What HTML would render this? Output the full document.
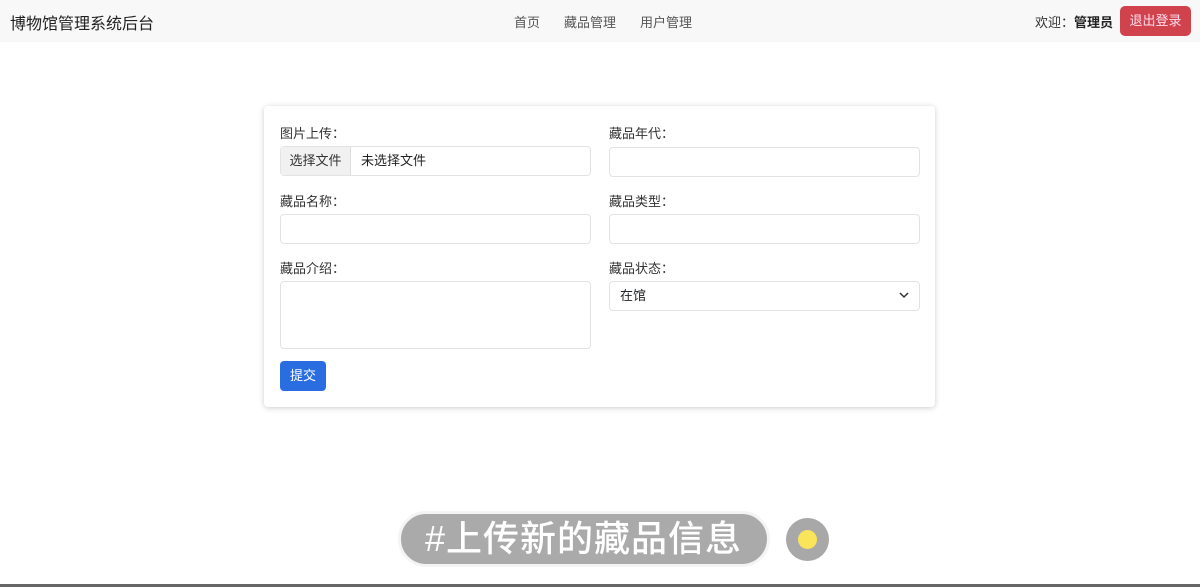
<!DOCTYPE html>
<html><head><meta charset="utf-8"><style>
*{box-sizing:border-box;margin:0;padding:0}
body{width:1200px;height:587px;background:#fff;font-family:"Liberation Sans","Noto Sans CJK SC",sans-serif;position:relative;overflow:hidden;color:#212529}
.nav{position:absolute;left:0;top:0;width:1200px;height:42px;background:#f8f8f8}
.brand{position:absolute;left:10px;top:10px;font-size:16px;color:#222}
.links{position:absolute;left:514px;top:12px;font-size:13px;color:#555}
.links span{margin-right:24px}
.welcome{position:absolute;left:1035px;top:12px;font-size:13px;color:#333}
.welcome b{color:#222}
.logout{position:absolute;left:1120px;top:6px;width:71px;height:30px;background:#d0434c;border-radius:5px;font-size:13px;line-height:30px;text-align:center;color:#fde}
.card{position:absolute;left:264px;top:106px;width:671px;height:301px;border-radius:4px;box-shadow:0 1px 6px rgba(0,0,0,.2);background:#fff}
.lbl{position:absolute;font-size:13px;color:#333}
.inp{position:absolute;width:311px;height:30px;border:1px solid #e3e3e3;border-radius:4px;background:#fff}
.btn{position:absolute;left:16px;top:255px;width:46px;height:30px;background:#2a6de0;border-radius:4px;color:#fff;font-size:13px;line-height:30px;text-align:center}
.pill{position:absolute;left:398px;top:511px;width:372px;height:56px;border-radius:28px;border:3px solid #f4f4f4;background:#aaa;color:#fff;font-size:36px;font-weight:500;line-height:50px;padding-left:24px;letter-spacing:1px;white-space:nowrap}
.dot{position:absolute;left:786px;top:518px;width:43px;height:43px;border-radius:50%;background:#a8a8a8}
.dot i{position:absolute;left:12px;top:12px;width:19px;height:19px;border-radius:50%;background:#fae45a}
.bline{position:absolute;left:0;top:584px;width:1200px;height:3px;background:#666}
</style></head><body>
<div class="nav">
<div class="brand">博物馆管理系统后台</div>
<div class="links"><span>首页</span><span>藏品管理</span><span>用户管理</span></div>
<div class="welcome">欢迎：<b>管理员</b></div>
<div class="logout">退出登录</div>
</div>
<div class="card">
<div class="lbl" style="left:16px;top:17px">图片上传：</div>
<div class="inp" style="left:16px;top:40px;font-size:13px;line-height:28px"><span style="display:inline-block;width:70px;height:28px;background:#f1f1f1;border-right:1px solid #ddd;text-align:center;color:#333">选择文件</span><span style="padding-left:10px;color:#222">未选择文件</span></div>
<div class="lbl" style="left:345px;top:17px">藏品年代：</div>
<div class="inp" style="left:345px;top:41px"></div>
<div class="lbl" style="left:16px;top:85px">藏品名称：</div>
<div class="inp" style="left:16px;top:108px"></div>
<div class="lbl" style="left:345px;top:85px">藏品类型：</div>
<div class="inp" style="left:345px;top:108px"></div>
<div class="lbl" style="left:16px;top:152px">藏品介绍：</div>
<div class="inp" style="left:16px;top:175px;height:68px"></div>
<div class="lbl" style="left:345px;top:152px">藏品状态：</div>
<div class="inp" style="left:345px;top:175px;font-size:13px;line-height:28px;padding-left:10px">在馆<svg style="position:absolute;right:10px;top:10px" width="10" height="7" viewBox="0 0 10 7"><path d="M1 1l4 4 4-4" fill="none" stroke="#333" stroke-width="1.5"/></svg></div>
<div class="btn">提交</div>
</div>
<div class="pill">#上传新的藏品信息</div>
<div class="dot"><i></i></div>
<div class="bline"></div>
</body></html>
